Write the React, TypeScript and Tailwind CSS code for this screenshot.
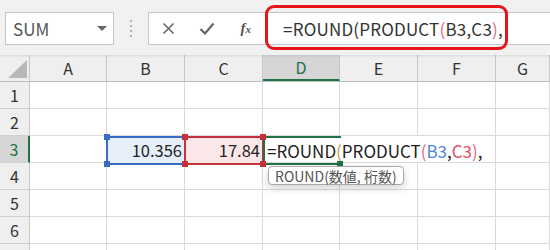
import React from "react";

const F = "[font-family:'Noto_Sans_CJK_JP','Noto_Sans',sans-serif]";

const colW = ["w-[30px]", "w-[77px]", "w-[78px]", "w-[78px]", "w-[77px]", "w-[78px]", "w-[78px]", "flex-1"];
const letters = ["", "A", "B", "C", "D", "E", "F", "G"];

function HeaderRow() {
  return (
    <div className="flex h-[27px] border-b border-[#bdbdbd] bg-[#efefef]">
      {letters.map((l, i) => {
        if (i === 0)
          return (
            <div key={i} className={`${colW[i]} shrink-0 border-r border-[#c8c8c8] relative`}>
              <svg className="absolute left-[8px] top-[5px]" width="19" height="18" viewBox="0 0 19 18">
                <polygon points="19,0 19,18 0,18" fill="#b8b8b8" />
              </svg>
            </div>
          );
        if (l === "D")
          return (
            <div key={i} className={`${colW[i]} shrink-0 border-r border-[#c8c8c8] bg-[#d6d6d6] border-b-2 border-b-[#217346] flex items-center justify-center text-[16px] text-[#217346]`}>
              {l}
            </div>
          );
        return (
          <div key={i} className={`${colW[i]} shrink-0 border-r border-[#c8c8c8] flex items-center justify-center text-[16px] text-[#333]`}>
            {l}
          </div>
        );
      })}
    </div>
  );
}

function DataRow({ n, label }: { n: number; label: boolean }) {
  const sel = n === 3;
  return (
    <div className="flex h-[27px]">
      <div
        className={`w-[30px] shrink-0 border-b border-[#d0d0d0] flex items-center justify-center text-[16px] ${
          sel ? "bg-[#d6d6d6] border-r-2 border-r-[#217346] text-[#217346]" : "bg-[#efefef] border-r border-r-[#c8c8c8] text-[#333]"
        }`}
      >
        {label ? n : ""}
      </div>
      {colW.slice(1).map((w, i) => {
        const noRight = sel && (i === 3 || i === 4);
        return (
          <div
            key={i}
            className={`${w} shrink-0 border-b border-[#dadada] ${noRight ? "" : "border-r border-r-[#dadada]"}`}
          />
        );
      })}
    </div>
  );
}

export default function App() {
  return (
    <div className={`w-[550px] h-[250px] overflow-hidden bg-white relative ${F}`}>
      {/* formula bar area */}
      <div className="h-[55px] bg-[#f1f1f1] flex items-start pt-[12px] relative">
        <div className="ml-[5px] w-[109px] h-[33px] shrink-0 bg-white border border-[#c6c6c6] flex items-center justify-between pl-[7px] pr-[6px]">
          <span className="text-[17px] leading-none text-[#555]">SUM</span>
          <svg width="10" height="6" viewBox="0 0 10 6">
            <polygon points="0,0 10,0 5,5" fill="#666" />
          </svg>
        </div>
        <div className="w-[34px] shrink-0 h-[33px] flex flex-col items-center justify-center gap-[3px]">
          <div className="w-[2px] h-[2px] bg-[#b0b0b0]" />
          <div className="w-[2px] h-[2px] bg-[#b0b0b0]" />
          <div className="w-[2px] h-[2px] bg-[#b0b0b0]" />
          <div className="w-[2px] h-[2px] bg-[#b0b0b0]" />
        </div>
        <div className="flex-1 h-[33px] bg-white border border-[#c6c6c6] border-r-0 flex items-center">
          <div className="w-[117px] shrink-0 h-full flex items-center border-r border-[#d0d0d0]">
            <div className="w-[40px] flex justify-center">
              <svg width="13" height="13" viewBox="0 0 13 13">
                <path d="M1.5 1.5 L11.5 11.5 M11.5 1.5 L1.5 11.5" stroke="#666" strokeWidth="1.6" />
              </svg>
            </div>
            <div className="w-[38px] flex justify-center">
              <svg width="16" height="13" viewBox="0 0 16 13">
                <path d="M1.5 7 L6 11.5 L14.5 1.5" stroke="#666" strokeWidth="2.2" fill="none" />
              </svg>
            </div>
            <div className="w-[39px] flex justify-center">
              <span className="[font-family:'Liberation_Serif',serif] italic font-bold text-[15px] text-[#555] leading-none">
                f<span className="text-[11px]">x</span>
              </span>
            </div>
          </div>
          <div className="pl-[17px] text-[17px] tracking-[0.2px] leading-none text-[#333] whitespace-nowrap">
            =ROUND(PRODUCT<span className="text-[#e06a88]">(</span>B3,C3<span className="text-[#e06a88]">)</span>,
          </div>
        </div>
        {/* red highlight */}
        <div className="absolute left-[265px] top-[5px] w-[243px] h-[45px] border-[3px] border-[#e8141c] rounded-[9px]" />
      </div>

      {/* grid */}
      <div className="relative">
        <div className="absolute left-0 right-0 top-0 h-[3px] bg-gradient-to-b from-[#00000014] to-transparent z-10" />
        <HeaderRow />
        {[1, 2, 3, 4, 5, 6, 7].map((n) => (
          <DataRow key={n} n={n} label={n < 7} />
        ))}

        {/* B3 selection */}
        <div className="absolute left-[106px] top-[81px] w-[80px] h-[29px] border-2 border-[#3a6cc5] bg-[#e6eef9] flex items-center justify-end pr-[2px] text-[16.5px] text-[#222] leading-none">
          10.356
        </div>
        {/* C3 selection */}
        <div className="absolute left-[184px] top-[81px] w-[80px] h-[29px] border-2 border-[#c4313b] bg-[#fbe7e7] flex items-center justify-end pr-[2px] text-[16.5px] text-[#222] leading-none">
          17.84
        </div>
        {/* handles */}
        <div className="absolute left-[104px] top-[79px] w-[6px] h-[6px] bg-[#3a6cc5]" />
        <div className="absolute left-[104px] top-[106px] w-[6px] h-[6px] bg-[#3a6cc5]" />
        <div className="absolute left-[182px] top-[79px] w-[6px] h-[6px] bg-[#c4313b]" />
        <div className="absolute left-[182px] top-[106px] w-[6px] h-[6px] bg-[#c4313b]" />

        {/* D3 active cell */}
        <div className="absolute left-[263px] top-[81px] w-[78px] h-[29px] border-y-2 border-l-2 border-[#217346] z-10" />
        <div className="absolute left-[260px] top-[79px] w-[6px] h-[6px] bg-[#c4313b] z-20" />
        <div className="absolute left-[260px] top-[106px] w-[6px] h-[6px] bg-[#c4313b] z-20" />
        <div className="absolute left-[337px] top-[106px] w-[6px] h-[6px] bg-[#217346] z-20" />
        <div className="absolute left-[267px] top-[81px] h-[29px] flex items-center whitespace-nowrap text-[17px] leading-none text-[#222] z-20">
          =ROUND<span className="text-[#c99a4e]">(</span>PRODUCT<span className="text-[#e06a88]">(</span>
          <span className="text-[#4f84dc]">B3</span>,<span className="text-[#e0505e]">C3</span>
          <span className="text-[#e06a88]">)</span>,
        </div>

        {/* tooltip */}
        <div className="absolute left-[268px] top-[111px] h-[19px] px-[6px] flex items-center bg-white border border-[#a8a8a8] rounded-[4px] shadow-[0_3px_8px_rgba(0,0,0,0.18)] text-[14px] leading-none text-[#555] whitespace-nowrap z-30">
          ROUND(数値, 桁数)
        </div>
      </div>
    </div>
  );
}
